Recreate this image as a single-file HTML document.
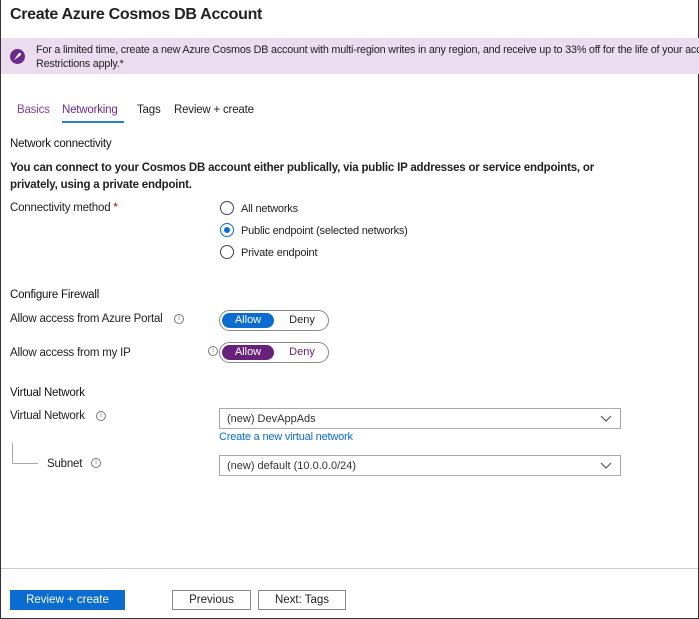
<!DOCTYPE html>
<html><head><style>
*{margin:0;padding:0;box-sizing:border-box}
body{width:699px;height:619px;position:relative;background:#fff;font-family:"Liberation Sans",sans-serif;color:#222;overflow:hidden}
.frame{position:absolute;left:0;top:0;width:699px;height:619px;border:1px solid #333;border-top:none}
.a{position:absolute;white-space:nowrap;font-size:11.5px;letter-spacing:-0.2px}
.b{font-weight:bold}
.info{position:absolute;width:10px;height:10px;border:1px solid #777;border-radius:50%;font-size:7px;color:#777;text-align:center;line-height:8px}
.radio{position:absolute;width:14px;height:14px;border:1px solid #444;border-radius:50%;background:#fff}
.tog{position:absolute;width:110px;height:21px;border:1px solid #888;border-radius:11px}
.tog .on{position:absolute;left:2px;top:2px;width:52px;height:15px;border-radius:8px;color:#fff;font-size:11px;text-align:center;line-height:15px}
.tog .off{position:absolute;left:58px;top:2px;width:48px;font-size:11px;text-align:center;line-height:15px}
.dd{position:absolute;left:219px;width:402px;height:21px;border:1px solid #aaa;font-size:11px;line-height:21px;padding-left:7px;color:#333}
.dd svg{position:absolute;right:8px;top:6px}
.btn{position:absolute;top:590px;height:20px;font-size:11.5px;text-align:center;line-height:20px}
</style></head><body>
<div class="frame"></div>
<div class="a" style="left:10px;top:6px;font-size:16px;font-weight:bold;color:#222;letter-spacing:-0.3px">Create Azure Cosmos DB Account</div>
<div style="position:absolute;left:1px;top:38px;width:698px;height:36px;background:#ecdcef"></div>
<div style="position:absolute;left:10px;top:49px;width:15px;height:15px;border-radius:50%;background:#6b2b8a"></div>
<svg style="position:absolute;left:13px;top:52px" width="9" height="9" viewBox="0 0 9 9"><path d="M1 8 L3 5 L6 1 L8 1 L8 3 L4 6 Z" fill="#fff"/></svg>
<div class="a" style="left:36px;top:44px;font-size:10.8px;letter-spacing:-0.2px">For a limited time, create a new Azure Cosmos DB account with multi-region writes in any region, and receive up to 33% off for the life of your account</div>
<div class="a" style="left:36px;top:58px;font-size:10.8px">Restrictions apply.*</div>
<div class="a" style="left:17px;top:104px;color:#8a3e9e">Basics</div>
<div class="a" style="left:62px;top:104px;color:#6b2b8a">Networking</div>
<div style="position:absolute;left:62px;top:121px;width:62px;height:2px;background:#2a7fd0"></div>
<div class="a" style="left:137px;top:104px">Tags</div>
<div class="a" style="left:174px;top:104px">Review + create</div>
<div class="a" style="left:10px;top:138px;color:#111">Network connectivity</div>
<div class="a b" style="left:10px;top:162px">You can connect to your Cosmos DB account either publically, via public IP addresses or service endpoints, or</div>
<div class="a b" style="left:10px;top:179px">privately, using a private endpoint.</div>
<div class="a" style="left:10px;top:202px">Connectivity method <span style="color:#c00">*</span></div>
<div class="radio" style="left:220px;top:201px"></div>
<div class="a" style="left:241px;top:203px;font-size:11px">All networks</div>
<div class="radio" style="left:220px;top:223px;border-color:#0a6cd0"><div style="position:absolute;left:3px;top:3px;width:6px;height:6px;border-radius:50%;background:#0a6cd0"></div></div>
<div class="a" style="left:241px;top:225px;font-size:11px">Public endpoint (selected networks)</div>
<div class="radio" style="left:220px;top:245px"></div>
<div class="a" style="left:241px;top:247px;font-size:11px">Private endpoint</div>
<div class="a" style="left:10px;top:289px;color:#111">Configure Firewall</div>
<div class="a" style="left:10px;top:313px">Allow access from Azure Portal</div>
<div class="info" style="left:174px;top:314px">i</div>
<div class="tog" style="left:219px;top:310px"><div class="on" style="background:#0a6cd0">Allow</div><div class="off">Deny</div></div>
<div class="a" style="left:10px;top:347px">Allow access from my IP</div>
<div class="info" style="left:208px;top:346px">i</div>
<div class="tog" style="left:219px;top:342px"><div class="on" style="background:#68217a">Allow</div><div class="off" style="color:#68217a">Deny</div></div>
<div class="a" style="left:10px;top:387px;color:#111">Virtual Network</div>
<div class="a" style="left:10px;top:410px">Virtual Network</div>
<div class="info" style="left:96px;top:411px">i</div>
<div class="dd" style="top:408px">(new) DevAppAds<svg width="12" height="7" viewBox="0 0 12 7"><path d="M1 1 L6 6 L11 1" fill="none" stroke="#555" stroke-width="1.2"/></svg></div>
<div class="a" style="left:219px;top:431px;color:#0a6cd0;font-size:11px">Create a new virtual network</div>
<div style="position:absolute;left:12px;top:443px;width:26px;height:21px;border-left:1px solid #aaa;border-bottom:1px solid #aaa"></div>
<div class="a" style="left:47px;top:458px">Subnet</div>
<div class="info" style="left:91px;top:458px">i</div>
<div class="dd" style="top:455px">(new) default (10.0.0.0/24)<svg width="12" height="7" viewBox="0 0 12 7"><path d="M1 1 L6 6 L11 1" fill="none" stroke="#555" stroke-width="1.2"/></svg></div>
<div style="position:absolute;left:1px;top:568px;width:697px;height:1px;background:#ccc"></div>
<div class="btn" style="left:10px;width:115px;background:#0a6cd0;color:#fff">Review + create</div>
<div class="btn" style="left:172px;width:79px;border:1px solid #888;line-height:18px">Previous</div>
<div class="btn" style="left:258px;width:88px;border:1px solid #888;line-height:18px">Next: Tags</div>
</body></html>
